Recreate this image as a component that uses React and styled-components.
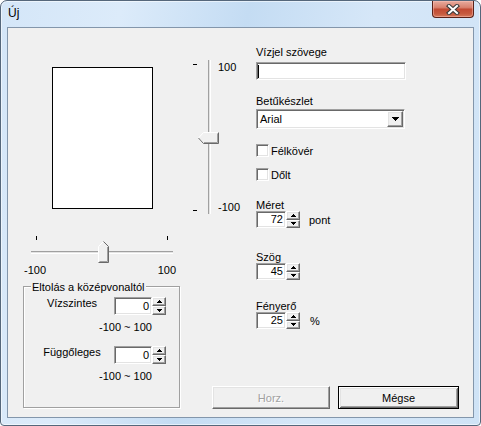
import React from "react"
import styled, { createGlobalStyle } from "styled-components"

const GlobalStyle = createGlobalStyle`
  html, body {
    margin: 0;
    padding: 0;
    background: #fff;
  }
  body {
    font-family: "Liberation Sans", Arial, sans-serif;
    font-size: 11px;
    color: #000;
  }
  * {
    box-sizing: border-box;
  }
`

const sunken = `
  border: 1px solid;
  border-color: #a0a0a0 #fff #fff #a0a0a0;
  box-shadow: inset 1px 1px 0 #696969, inset -1px -1px 0 #e3e3e3;
`

const raised = `
  border: 1px solid;
  border-color: #fff #696969 #696969 #fff;
  box-shadow: inset -1px -1px 0 #a0a0a0, inset 1px 1px 0 #e3e3e3;
`

const Arrow = ({ up }) => (
  <svg width="5" height="3" viewBox="0 0 5 3" shapeRendering="crispEdges">
    <path d={up ? "M2 0h1v1h1v1h1v1H0V2h1V1h1z" : "M0 0h5v1H4v1H3v1H2V2H1V1H0z"} fill="#000" />
  </svg>
)

const Spin = ({ value, w, h, bw }) => (
  <SpinWrap>
    <SpinInput $w={w} $h={h}>{value}</SpinInput>
    <SpinButtons $w={bw} $h={h}>
      <SpinHalf><Arrow up /></SpinHalf>
      <SpinHalf><Arrow /></SpinHalf>
    </SpinButtons>
  </SpinWrap>
)

const App = () => {
  return (
    <>
      <GlobalStyle />
      <Window>
        <TitleBar>
          <Title>Új</Title>
          <CloseButton>
            <svg width="14" height="11" viewBox="0 0 14 11">
              <path d="M3 2 L11 9 M11 2 L3 9" stroke="#3b3b3b" strokeWidth="4.2" strokeLinecap="square" />
              <path d="M3 2 L11 9 M11 2 L3 9" stroke="#fff" strokeWidth="2" strokeLinecap="square" />
            </svg>
          </CloseButton>
        </TitleBar>
        <Client>
          <LeftPane>
            <Preview />
            <HSlider>
              <HTicks>
                <HTick />
                <HTick />
              </HTicks>
              <HTrack />
              <HLabels>
                <span>-100</span>
                <span>100</span>
              </HLabels>
              <HThumb width="11" height="22" viewBox="0 0 11 22">
                <polygon points="0.5,5.5 5.5,0.5 10.5,5.5 10.5,21.5 0.5,21.5" fill="#f0f0f0" />
                <path d="M0.5 21 V5.5 L5.5 0.5" stroke="#fff" fill="none" />
                <path d="M5.5 0.5 L10.5 5.5 V21.5 H0.5" stroke="#696969" fill="none" />
                <path d="M9.5 6 V20.5 H1.5" stroke="#a0a0a0" fill="none" />
              </HThumb>
            </HSlider>
            <GroupFrame>
              <GroupCaption>Eltolás a középvonaltól</GroupCaption>
              <GroupRow>
                <RowLabel>Vízszintes</RowLabel>
                <Spin value="0" w={38} h={18} bw={14} />
              </GroupRow>
              <Range $mt={6}>-100 ~ 100</Range>
              <GroupRow $mt={13}>
                <RowLabel>Függőleges</RowLabel>
                <Spin value="0" w={38} h={18} bw={14} />
              </GroupRow>
              <Range $mt={6}>-100 ~ 100</Range>
            </GroupFrame>
          </LeftPane>

          <RightPane>
            <TopRow>
              <VSlider>
                <VTicks>
                  <VTick />
                  <VTick />
                </VTicks>
                <VTrack />
                <VLabels>
                  <span>100</span>
                  <span>-100</span>
                </VLabels>
                <VThumb width="21" height="12" viewBox="0 0 21 12">
                  <polygon points="0.5,6 5.5,0.5 20.5,0.5 20.5,11.5 5.5,11.5" fill="#f0f0f0" />
                  <path d="M5.5 11 L0.5 6 L5.5 0.5 H20.5" stroke="#fff" fill="none" />
                  <path d="M20.5 0.5 V11.5 H5.5 L0.5 6" stroke="#696969" fill="none" />
                  <path d="M19.5 1.5 V10.5 H6" stroke="#a0a0a0" fill="none" />
                </VThumb>
              </VSlider>

              <Form>
                <FieldLabel $mt={18}>Vízjel szövege</FieldLabel>
                <TextBox>
                  <Caret />
                </TextBox>
                <FieldLabel $mt={15}>Betűkészlet</FieldLabel>
                <SelectBox>
                  <SelectText>Arial</SelectText>
                  <DropButton>
                    <svg width="7" height="4" viewBox="0 0 7 4" shapeRendering="crispEdges">
                      <path d="M0 0h7v1H6v1H5v1H4v1H3V3H2V2H1V1H0z" fill="#000" />
                    </svg>
                  </DropButton>
                </SelectBox>
                <CheckRow $mt={15}>
                  <CheckBox />
                  <span>Félkövér</span>
                </CheckRow>
                <CheckRow $mt={11}>
                  <CheckBox />
                  <span>Dőlt</span>
                </CheckRow>
                <FieldLabel $mt={18}>Méret</FieldLabel>
                <SpinRow $gap={9}>
                  <Spin value="72" w={30} h={17} bw={14} />
                  <span>pont</span>
                </SpinRow>
                <FieldLabel $mt={23}>Szög</FieldLabel>
                <SpinRow>
                  <Spin value="45" w={30} h={17} bw={14} />
                </SpinRow>
                <FieldLabel $mt={20}>Fényerő</FieldLabel>
                <SpinRow $gap={10}>
                  <Spin value="25" w={30} h={17} bw={14} />
                  <span>%</span>
                </SpinRow>
              </Form>
            </TopRow>

            <ButtonRow>
              <PushButton $w={118} disabled>Horz.</PushButton>
              <PushButton $w={121} $default>Mégse</PushButton>
            </ButtonRow>
          </RightPane>
        </Client>
      </Window>
    </>
  )
}

export default App

const Window = styled.div`
  width: 481px;
  height: 426px;
  display: flex;
  flex-direction: column;
  padding: 0 6px 7px 6px;
  border: 1px solid #55677b;
  border-radius: 7px 7px 4px 4px;
  background: linear-gradient(100deg, #d4e6f8 0%, #dcebfa 22%, #c4dcf3 45%, #d6e7f8 68%, #cfe3f6 100%);
  box-shadow: inset 0 0 0 1px rgba(255, 255, 255, 0.55);
  overflow: hidden;
`

const TitleBar = styled.div`
  height: 26px;
  flex: none;
  display: flex;
  justify-content: space-between;
  align-items: flex-start;
`

const Title = styled.div`
  padding: 5px 0 0 1px;
  font-size: 12px;
  line-height: 14px;
  color: #000;
`

const CloseButton = styled.div`
  width: 42px;
  height: 17px;
  display: flex;
  align-items: center;
  justify-content: center;
  border: 1px solid #5a2118;
  border-top: none;
  border-radius: 0 0 4px 4px;
  background: linear-gradient(180deg, #e8ab9e 0%, #d9826f 40%, #c24a33 52%, #c65a3f 80%, #d57a5c 100%);
  box-shadow: inset 0 0 0 1px rgba(255, 200, 190, 0.45);
`

const Client = styled.div`
  flex: 1;
  display: flex;
  background: #f0f0f0;
  border: 1px solid #8396ab;
`

const LeftPane = styled.div`
  width: 183px;
  flex: none;
  display: flex;
  flex-direction: column;
  align-items: flex-start;
`

const Preview = styled.div`
  margin: 39px 0 0 44px;
  width: 101px;
  height: 142px;
  background: #fff;
  border: 1px solid #000;
`

const HSlider = styled.div`
  position: relative;
  margin: 27px 0 0 16px;
  width: 152px;
`

const HTicks = styled.div`
  margin-left: 12px;
  width: 132px;
  height: 4px;
  display: flex;
  justify-content: space-between;
`

const HTick = styled.div`
  width: 1px;
  height: 4px;
  background: #000;
`

const HTrack = styled.div`
  margin: 11px 0 0 7px;
  width: 142px;
  height: 3px;
  background: #e3e3e3;
  border-top: 1px solid #a0a0a0;
  border-bottom: 1px solid #fff;
`

const HLabels = styled.div`
  margin-top: 10px;
  display: flex;
  justify-content: space-between;
  line-height: 12px;
`

const HThumb = styled.svg`
  position: absolute;
  left: 74px;
  top: 5px;
`

const GroupFrame = styled.div`
  position: relative;
  margin: 10px 0 0 15px;
  width: 157px;
  height: 122px;
  padding: 10px 0 0 6px;
  border: 1px solid #a0a0a0;
  box-shadow: 1px 1px 0 #fff, inset 1px 1px 0 #fff;
`

const GroupCaption = styled.span`
  position: absolute;
  top: -6px;
  left: 7px;
  padding: 0 1px;
  line-height: 12px;
  background: #f0f0f0;
`

const GroupRow = styled.div`
  display: flex;
  align-items: flex-start;
  margin-top: ${(p) => p.$mt || 0}px;
`

const RowLabel = styled.div`
  width: 84px;
  text-align: center;
  line-height: 12px;
`

const Range = styled.div`
  margin: ${(p) => p.$mt}px 0 0 69px;
  line-height: 12px;
`

const SpinWrap = styled.div`
  display: flex;
  flex: none;
`

const SpinInput = styled.div`
  ${sunken}
  width: ${(p) => p.$w}px;
  height: ${(p) => p.$h}px;
  background: #fff;
  text-align: right;
  padding-right: 2px;
  line-height: ${(p) => p.$h - 2}px;
`

const SpinButtons = styled.div`
  width: ${(p) => p.$w}px;
  height: ${(p) => p.$h}px;
  display: flex;
  flex-direction: column;
`

const SpinHalf = styled.div`
  ${raised}
  flex: 1;
  display: flex;
  align-items: center;
  justify-content: center;
  background: #f0f0f0;
`

const RightPane = styled.div`
  flex: 1;
  display: flex;
  flex-direction: column;
  padding: 0 14px 8px 0;
`

const TopRow = styled.div`
  display: flex;
  align-items: flex-start;
`

const VSlider = styled.div`
  position: relative;
  flex: none;
  display: flex;
  width: 65px;
  height: 154px;
  margin-top: 32px;
  padding-left: 2px;
`

const VTicks = styled.div`
  display: flex;
  flex-direction: column;
  justify-content: space-between;
  padding: 4px 0 3px;
`

const VTick = styled.div`
  width: 4px;
  height: 1px;
  background: #000;
`

const VTrack = styled.div`
  margin-left: 11px;
  width: 3px;
  background: #e3e3e3;
  border-left: 1px solid #a0a0a0;
  border-right: 1px solid #fff;
`

const VLabels = styled.div`
  margin-left: 7px;
  display: flex;
  flex-direction: column;
  justify-content: space-between;
  padding: 1px 0 1px;
  line-height: 12px;
`

const VThumb = styled.svg`
  position: absolute;
  left: 7px;
  top: 72px;
`

const Form = styled.div`
  flex: 1;
  display: flex;
  flex-direction: column;
  align-items: flex-start;
`

const FieldLabel = styled.div`
  margin-top: ${(p) => p.$mt}px;
  line-height: 12px;
`

const TextBox = styled.div`
  ${sunken}
  margin-top: 4px;
  width: 150px;
  height: 18px;
  background: #fff;
  padding: 2px 0 0 1px;
`

const Caret = styled.div`
  width: 1px;
  height: 13px;
  background: #000;
`

const SelectBox = styled.div`
  ${sunken}
  margin-top: 2px;
  width: 149px;
  height: 20px;
  background: #fff;
  display: flex;
  align-items: center;
  padding: 1px;
`

const SelectText = styled.div`
  flex: 1;
  padding-left: 2px;
  line-height: 14px;
`

const DropButton = styled.div`
  ${raised}
  width: 16px;
  height: 16px;
  display: flex;
  align-items: center;
  justify-content: center;
  background: #f0f0f0;
`

const CheckRow = styled.div`
  margin-top: ${(p) => p.$mt}px;
  display: flex;
  align-items: center;
  gap: 2px;
  height: 13px;
  line-height: 12px;
`

const CheckBox = styled.div`
  ${sunken}
  width: 13px;
  height: 13px;
  background: #fff;
`

const SpinRow = styled.div`
  display: flex;
  align-items: center;
  gap: ${(p) => p.$gap || 0}px;
  line-height: 12px;
`

const ButtonRow = styled.div`
  margin-top: auto;
  display: flex;
  justify-content: flex-end;
  gap: 8px;
`

const PushButton = styled.button`
  ${raised}
  width: ${(p) => p.$w}px;
  height: 23px;
  padding: 0;
  background: #f0f0f0;
  font-family: "Liberation Sans", Arial, sans-serif;
  font-size: 11px;
  color: #000;

  &:disabled {
    color: #a0a0a0;
    text-shadow: 1px 1px 0 #fff;
  }

  ${(p) =>
    p.$default &&
    `
    border: 1px solid #000;
    box-shadow: inset 1px 1px 0 #fff, inset -1px -1px 0 #696969,
      inset 2px 2px 0 #e3e3e3, inset -2px -2px 0 #a0a0a0;
  `}
`
